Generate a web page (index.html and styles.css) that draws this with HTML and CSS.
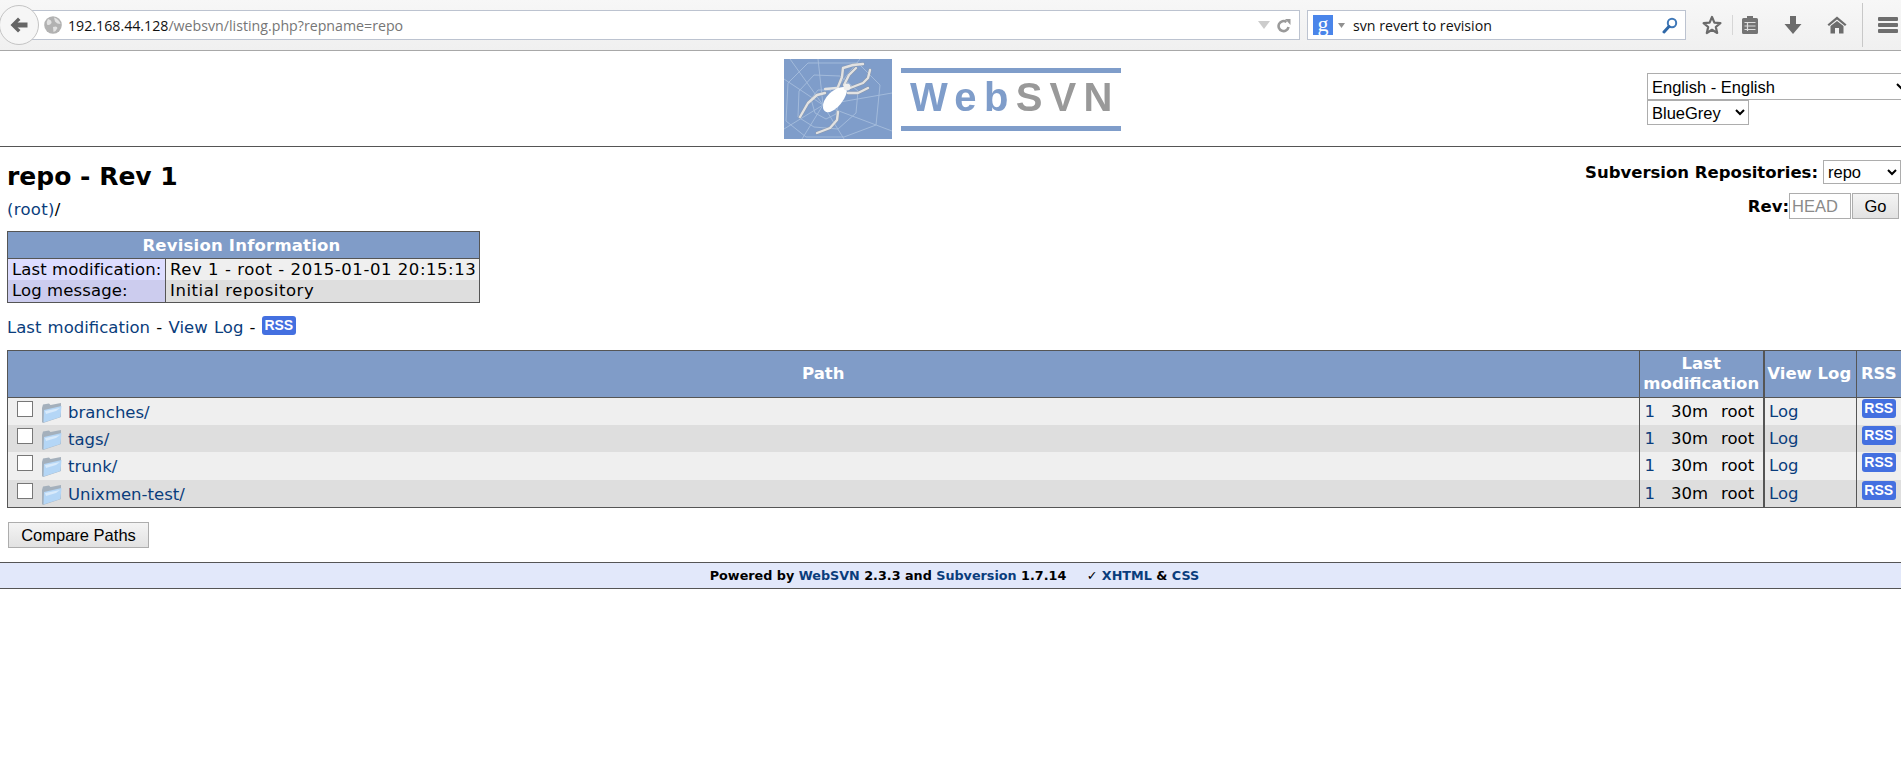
FILE: index.html
```html
<!DOCTYPE html>
<html lang="en">
<head>
  <meta charset="UTF-8">
  <title>WebSVN - repo</title>
  <link rel="stylesheet" href="styles.css">
</head>
<body>
  <div class="toolbar">
    <div class="back-btn">
      <svg width="18" height="16" viewBox="0 0 18 16"><path d="M0.5 8 L8 0.5 L10.5 3 L7.5 5.5 L17.5 5.5 L17.5 10.5 L7.5 10.5 L10.5 13 L8 15.5 Z" fill="#666666"/></svg>
    </div>
    <div class="urlbar">
      <svg class="globe" width="18" height="18" viewBox="0 0 18 18"><circle cx="9" cy="9" r="8.8" fill="#b2b2b2"/><path d="M4 3 Q8 4 7.5 7 Q5.5 10 3 8.5 Q2 6 4 3 Z M10 1.5 Q15 3 16.5 8 Q13 8 11 5.5 Z M9 11 Q13 9.5 13.5 12 Q12 15.5 9.5 16 Z" fill="#e2e2e2"/></svg>
      <span class="url-host">192.168.44.128</span><span class="url-path">/websvn/listing.php?repname=repo</span>
      <svg class="url-drop" width="14" height="10" viewBox="0 0 14 10"><path d="M1 1 H13 L7 9 Z" fill="#cccccc"/></svg>
      <svg class="url-reload" width="14" height="15" viewBox="0 0 14 15"><path d="M11.5 9 A5 5 0 1 1 9.5 4" fill="none" stroke="#9a9a9a" stroke-width="2.6"/><path d="M8 1 H13.5 V7 Z" fill="#9a9a9a"/></svg>
    </div>
    <div class="searchbar">
      <span class="g-badge">g</span>
      <svg class="g-drop" width="7" height="5" viewBox="0 0 7 5"><path d="M0 0 H7 L3.5 5 Z" fill="#909090"/></svg>
      <span class="search-text">svn revert to revision</span>
      <svg class="search-glass" width="16" height="17" viewBox="0 0 16 17"><circle cx="10" cy="6" r="4.2" fill="none" stroke="#3f78b8" stroke-width="2"/><path d="M7 9.5 L2 15" stroke="#2f68a8" stroke-width="3" stroke-linecap="round"/></svg>
    </div>
    <div class="tool-icons">
      <svg class="icon-star" width="20" height="20" viewBox="0 0 20 20"><path d="M10 2 L12.4 7.6 L18.4 8.1 L13.8 12 L15.2 18 L10 14.8 L4.8 18 L6.2 12 L1.6 8.1 L7.6 7.6 Z" fill="#f4f4f4" stroke="#6a6a6a" stroke-width="2.2" stroke-linejoin="round"/></svg>
      <span class="tool-sep"></span>
      <svg class="icon-clip" width="18" height="20" viewBox="0 0 18 20"><path d="M2.5 3 H6 V1 H12 V3 H15.5 Q17 3 17 4.5 V17.5 Q17 19 15.5 19 H2.5 Q1 19 1 17.5 V4.5 Q1 3 2.5 3 Z" fill="#747474"/><path d="M3.5 7.5 H14.5 M3.5 11 H14.5 M3.5 14.5 H14.5 M6.5 7 V16" stroke="#dedede" stroke-width="1.2"/></svg>
      <svg class="icon-down" width="18" height="20" viewBox="0 0 18 20"><path d="M6 1 H12 V9 H17.5 L9 19 L0.5 9 H6 Z" fill="#6c6c6c"/></svg>
      <svg class="icon-home" width="20" height="18" viewBox="0 0 20 18"><path d="M10 0.5 L19.5 8.5 L18 10 L10 3.5 L2 10 L0.5 8.5 Z" fill="#6c6c6c"/><path d="M10 5 L16.5 10 V17.5 H12 V12 H8 V17.5 H3.5 V10 Z" fill="#6c6c6c"/></svg>
      <span class="tool-sep tall"></span>
      <div class="menu-btn"><i></i><i></i><i></i></div>
    </div>
  </div>

  <div class="page-head">
    <div class="logo">
      <svg class="logo-mark" width="108" height="80" viewBox="0 0 108 80">
        <rect width="108" height="80" fill="#7f9dca"/>
        <g fill="none" stroke="#a6bddd" stroke-width="0.9">
          <path d="M39 46 L0 20 M39 46 L0 70 M39 46 L18 80 M39 46 L60 80 M39 46 L108 72 M39 46 L108 34 M39 46 L76 0 M39 46 L34 0 M39 46 L6 0"/>
          <path d="M27 40 L31 54 L42 60 L52 55 L55 42 L46 31 L34 31 Z"/>
          <path d="M15 32 L14 58 L30 68 L54 70 L72 54 L74 32 L56 17 L30 16 Z"/>
          <path d="M4 24 L2 62 L22 78 L60 78 L92 66 L96 26 L74 4 L24 4 Z"/>
        </g>
        <g fill="none" stroke="#8f8f8f" stroke-width="3.2" stroke-linecap="round" stroke-linejoin="round" opacity="0.55">
          <path d="M54 28 L58 18 L59 9 L69 6 L79 5"/>
          <path d="M60 26 L65 16 L72 9"/>
          <path d="M66 29 L79 24 L84 19 L86 11"/>
          <path d="M64 34 L74 34 L84 29"/>
          <path d="M41 34 L33 36 L24 44 L16 58"/>
          <path d="M54 53 L53 61 L46 69 L33 74"/>
        </g>
        <g fill="none" stroke="#e2e2e2" stroke-width="2.4" stroke-linecap="round" stroke-linejoin="round">
          <path d="M54 28 L58 18 L59 9 L69 6 L79 5"/>
          <path d="M60 26 L65 16 L72 9"/>
          <path d="M66 29 L79 24 L84 19 L86 11"/>
          <path d="M64 34 L74 34 L84 29"/>
          <path d="M41 34 L33 36 L24 44 L16 58"/>
          <path d="M41 30 L53 29"/>
          <path d="M54 53 L53 61 L46 69 L33 74"/>
        </g>
        <path d="M39 49 Q38 42 46 34 Q54 27 61 28 Q65 31 60 40 Q54 50 46 53 Q40 54 39 49 Z" fill="#ffffff"/>
        <circle cx="63" cy="28" r="3.5" fill="#eeeeee"/>
      </svg>
      <div class="wordmark">
        <span class="word-line"></span>
        <span class="word-text"><span class="word-web">Web</span><span class="word-svn">SVN</span></span>
        <span class="word-line"></span>
      </div>
    </div>
    <div class="pickers">
      <select class="pick-lang"><option>English - English</option></select>
      <select class="pick-theme"><option>BlueGrey</option></select>
    </div>
  </div>

  <div class="content">
    <div class="title-row">
      <div>
        <h1>repo - Rev 1</h1>
        <p class="crumb"><a href="#">(root)</a>/</p>
      </div>
      <div class="repo-nav">
        <div class="repo-line"><b>Subversion Repositories:</b> <select class="pick-repo"><option>repo</option></select></div>
        <div class="rev-line"><b>Rev:</b><input class="rev-input" placeholder="HEAD"><button class="btn go-btn">Go</button></div>
      </div>
    </div>

    <table class="info">
      <tr><th colspan="2">Revision Information</th></tr>
      <tr class="row-a"><td class="info-key">Last modification:</td><td class="info-val">Rev 1 - root - 2015-01-01 20:15:13</td></tr>
      <tr class="row-b"><td class="info-key">Log message:</td><td class="info-val">Initial repository</td></tr>
    </table>

    <p class="actions"><a href="#">Last modification</a> - <a href="#">View Log</a> - <span class="rss">RSS</span></p>

    <table class="listing">
      <colgroup><col><col class="c-mod"><col class="c-log"><col class="c-rss"></colgroup>
      <thead>
        <tr><th>Path</th><th>Last modification</th><th>View Log</th><th>RSS</th></tr>
      </thead>
      <tbody id="rows"></tbody>
    </table>

    <button class="btn compare-btn">Compare Paths</button>
  </div>

  <div class="footer">
    Powered by <a href="#">WebSVN</a> 2.3.3 and <a href="#">Subversion</a> 1.7.14 <span class="valid">✓ <a href="#">XHTML</a> &amp; <a href="#">CSS</a></span>
  </div>

  <script>
    // Directory rows of the listing
    const paths = ["branches/", "tags/", "trunk/", "Unixmen-test/"];
    const folderIcon = '<svg class="folder" width="21" height="21" viewBox="0 0 21 21"><path d="M1 6 L2 2.5 L8 1.5 L9.5 3 L20 1 L20 15 L2 21 L1 20 Z" fill="#a4b0bc"/><path d="M3 8 L20.5 4 L19.5 15 L2.5 20.5 Z" fill="#b4d6f6"/><path d="M4 9 L19 6 L15 9 L5 12 Z" fill="#d8eafb"/></svg>';
    const tbody = document.getElementById("rows");
    paths.forEach((name, i) => {
      const row = document.createElement("tr");
      row.className = i % 2 === 0 ? "row-a" : "row-b";
      row.innerHTML = `<td class="path-cell"><input type="checkbox" class="pick">${folderIcon}<a href="#">${name}</a></td>` +
        `<td class="mod-cell"><a href="#">1</a><span class="age">30m</span><span class="who">root</span></td>` +
        `<td class="log-cell"><a href="#">Log</a></td><td class="rss-cell"><span class="rss">RSS</span></td>`;
      tbody.appendChild(row);
    });
  </script>
</body>
</html>
```

FILE: styles.css
```css
html, body {
  overflow: hidden;
}

body {
  margin: 0;
  height: 767px;
  background: #ffffff;
  color: #000000;
  font-family: "DejaVu Sans", sans-serif;
  font-size: 16.5px;
}

a {
  color: #0a3d7c;
  text-decoration: none;
}

/* Browser toolbar */
.toolbar {
  display: flex;
  align-items: center;
  height: 51px;
  box-sizing: border-box;
  background: linear-gradient(#f7f7f7, #f0f0f0);
  border-bottom: 1px solid #a8a8a8;
  font-family: "Open Sans", sans-serif;
  font-size: 14.2px;
}

.back-btn {
  position: relative;
  z-index: 1;
  display: flex;
  align-items: center;
  justify-content: center;
  width: 40px;
  height: 40px;
  flex: none;
  margin: 0 -9px 0 -1px;
  border: 1px solid #c4c4c4;
  border-radius: 50%;
  box-sizing: border-box;
  background: #f6f6f6;
}

.urlbar {
  display: flex;
  align-items: center;
  width: 1270px;
  height: 30px;
  box-sizing: border-box;
  padding: 0 8px 0 13px;
  background: #ffffff;
  border: 1px solid #bcc3d0;
}

.globe {
  margin-right: 6px;
}

.url-host {
  color: #111111;
}

.url-path {
  flex: 1;
  color: #767676;
}

.url-reload {
  margin-left: 6px;
}

.searchbar {
  display: flex;
  align-items: center;
  width: 379px;
  height: 30px;
  box-sizing: border-box;
  margin-left: 7px;
  padding: 0 7px 0 5px;
  background: #ffffff;
  border: 1px solid #bcc3d0;
}

.g-badge {
  width: 20px;
  height: 20px;
  background: #4a85ea;
  color: #ffffff;
  font-family: "Liberation Serif", serif;
  font-size: 22px;
  line-height: 17px;
  text-align: center;
}

.g-drop {
  margin: 0 8px 0 5px;
}

.search-text {
  flex: 1;
  color: #111111;
}

.tool-icons {
  display: flex;
  align-items: center;
  flex: 1;
  padding-left: 16px;
}

.tool-sep {
  width: 1px;
  height: 20px;
  margin: 0 8px 0 10px;
  background: #d6d6d6;
}

.tool-sep.tall {
  height: 44px;
  margin: 0 15px;
  background: #c8c8c8;
}

.icon-clip, .icon-down {
  margin-right: 25px;
}

.menu-btn {
  display: flex;
  flex-direction: column;
  gap: 2px;
}

.menu-btn i {
  display: block;
  width: 20px;
  height: 4px;
  border-radius: 1px;
  background: #6e6e6e;
}

/* Logo and language pickers */
.page-head {
  display: grid;
  grid-template-columns: 863px 1fr;
  box-sizing: border-box;
  height: 96px;
  padding: 8px 0 0 784px;
  border-bottom: 1px solid #555555;
}

.logo {
  display: flex;
  gap: 9px;
  height: 80px;
}

.logo-mark {
  filter: blur(0.4px);
}

.wordmark {
  display: flex;
  flex-direction: column;
  justify-content: space-between;
  width: 220px;
  padding: 9px 0 8px;
  box-sizing: border-box;
}

.word-line {
  display: block;
  height: 5px;
  background: #7f9dca;
}

.word-text {
  padding: 0 0 5px 9px;
  font-family: "Liberation Sans", sans-serif;
  font-size: 40px;
  font-weight: bold;
  line-height: 44px;
  letter-spacing: 7.3px;
  white-space: nowrap;
  filter: blur(0.5px);
}

.word-web {
  color: #7f9dca;
}

.word-svn {
  color: #999999;
}

.pickers {
  display: flex;
  flex-direction: column;
  align-items: flex-start;
  padding-top: 14px;
}

select, input, .btn {
  box-sizing: border-box;
  font-family: "Liberation Sans", sans-serif;
  font-size: 16.5px;
  color: #000000;
  border: 1px solid #adadad;
  border-radius: 0;
  background: #ffffff;
}

.pick-lang {
  width: 263px;
  height: 27px;
  flex: none;
}

.pick-theme {
  width: 102px;
  height: 25px;
}

.content {
  padding: 0 2px 0 7px;
}

/* Title and repository nav */
.title-row {
  display: flex;
  justify-content: space-between;
  height: 84px;
}

h1 {
  margin: 14px 0 0;
  font-size: 25px;
  line-height: 32px;
}

.crumb {
  margin: 7px 0 0;
  line-height: 20px;
  letter-spacing: 0.3px;
}

.repo-nav {
  display: flex;
  flex-direction: column;
  align-items: flex-end;
  margin-right: -2px;
}

.repo-line {
  display: flex;
  align-items: center;
  gap: 5px;
  margin-top: 13px;
}

.pick-repo {
  width: 78px;
  height: 24px;
}

.rev-line {
  display: flex;
  align-items: center;
  margin-top: 9px;
  margin-right: 2px;
}

.rev-input {
  width: 62px;
  height: 26px;
  padding: 0 2px;
}

.rev-input::placeholder {
  color: #8a8a8a;
}

.btn {
  background: linear-gradient(#f4f4f4, #e2e2e2);
}

.go-btn {
  width: 47px;
  height: 26px;
  margin-left: 1px;
}

/* Revision info box */
.info {
  width: 473px;
  border: 1px solid #555555;
  border-collapse: collapse;
  line-height: 21px;
}

.info th {
  height: 26px;
  padding: 0 4px 0 0;
  background: #809cc8;
  color: #ffffff;
  border-bottom: 1px solid #555555;
  letter-spacing: 0.2px;
}

.info td {
  padding: 0 0 0 4px;
  white-space: nowrap;
}

.info .row-b td {
  line-height: 22px;
}

.info .info-key {
  width: 153px;
  background: #ddddff;
  border-right: 1px solid #555555;
  letter-spacing: 0.1px;
}

.info .row-b .info-key {
  background: #ccccee;
}

.info-val {
  letter-spacing: 0.55px;
}

.row-a td {
  background: #efefef;
}

.row-b td {
  background: #dedede;
}

.actions {
  margin: 12px 0 0;
  height: 35px;
  line-height: 25px;
  word-spacing: 1px;
}

.rss {
  display: inline-block;
  position: relative;
  top: -3px;
  width: 34px;
  height: 19px;
  border-radius: 3px;
  background: #4470e0;
  color: #ffffff;
  font-family: "Liberation Sans", sans-serif;
  font-size: 14px;
  font-weight: bold;
  line-height: 19px;
  text-align: center;
  word-spacing: 0;
}

/* Directory listing */
.listing {
  width: 1894px;
  table-layout: fixed;
  border: 1px solid #555555;
  border-right: none;
  border-collapse: collapse;
}

.c-mod {
  width: 125px;
}

.c-log {
  width: 92px;
}

.c-rss {
  width: 45px;
}

.listing th {
  height: 46px;
  padding: 0;
  background: #809cc8;
  color: #ffffff;
  line-height: 20px;
  border-left: 1px solid #555555;
  border-bottom: 1px solid #555555;
  white-space: nowrap;
}

.listing th:nth-child(2) {
  white-space: normal;
}

.listing th:nth-child(3) {
  padding-right: 2px;
}

.listing td {
  height: 27px;
  padding: 0;
  line-height: 20px;
  border-left: 1px solid #555555;
  vertical-align: middle;
  white-space: nowrap;
}

.listing tr:nth-child(3) td {
  height: 28px;
}

.listing th:nth-child(3), .listing td:nth-child(3) {
  border-left-width: 2px;
}

.path-cell {
  padding-left: 9px !important;
}

.pick {
  width: 16px;
  height: 16px;
  margin: 0 8px 0 0;
  vertical-align: 1px;
  appearance: none;
  border: 1px solid #777777;
  background: #ffffff;
}

.folder {
  margin-right: 6px;
  vertical-align: -5px;
}

.mod-cell {
  padding-left: 5px !important;
}

.age {
  margin-left: 16px;
}

.who {
  margin-left: 13px;
}

.log-cell {
  padding-left: 4px !important;
}

.rss-cell {
  text-align: center;
  vertical-align: top !important;
}

.rss-cell .rss {
  top: 0;
}

.compare-btn {
  display: block;
  width: 141px;
  height: 26px;
  margin: 14px 0 0 1px;
}

/* Footer */
.footer {
  height: 27px;
  box-sizing: border-box;
  margin-top: 14px;
  padding-left: 8px;
  background: #e2e8fa;
  border-top: 1px solid #555555;
  border-bottom: 1px solid #555555;
  font-size: 12.75px;
  font-weight: bold;
  line-height: 25px;
  text-align: center;
}

.valid {
  margin-left: 16px;
}
```
